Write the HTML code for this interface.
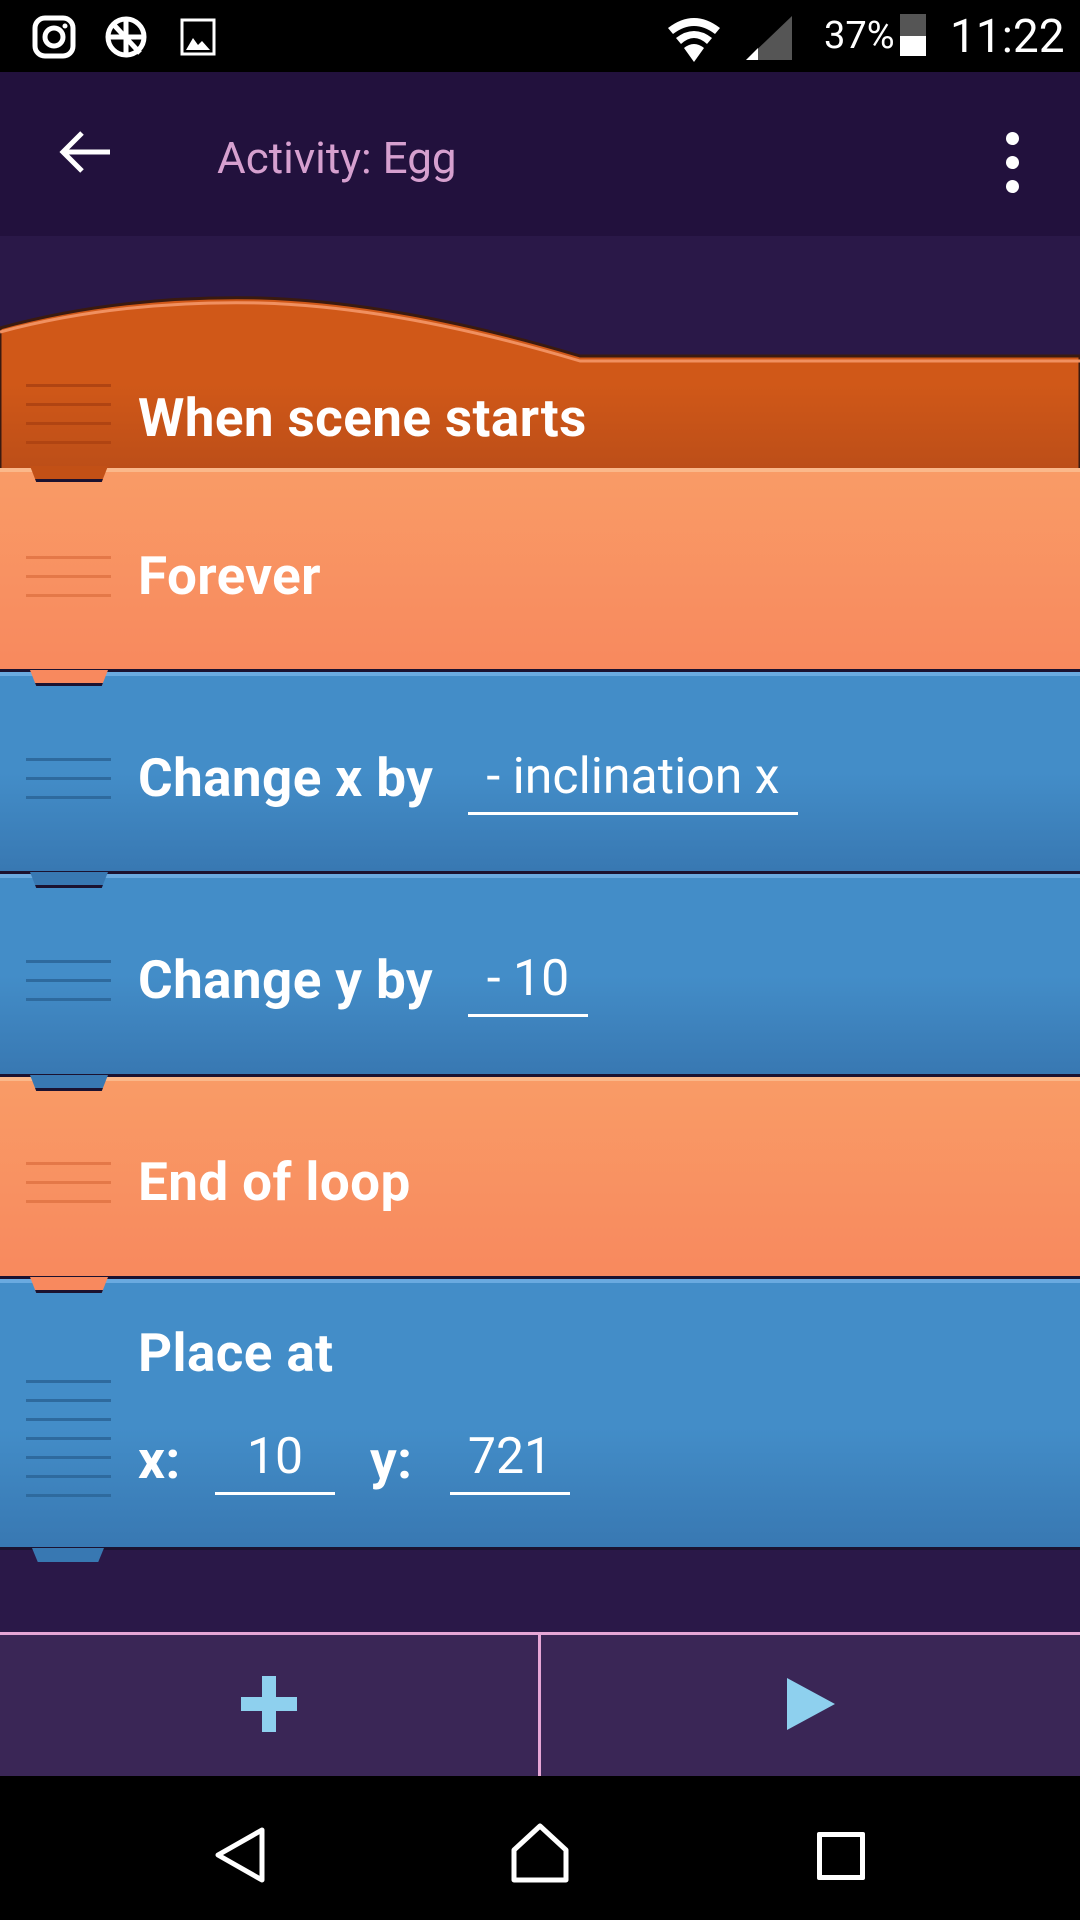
<!DOCTYPE html>
<html><head><meta charset="utf-8"><style>
*{margin:0;padding:0;box-sizing:border-box}
body{width:1080px;height:1920px;background:#2a1848;position:relative;overflow:hidden;font-family:"Roboto","Liberation Sans",sans-serif}
.abs{position:absolute}
.sb{left:0;top:0;width:1080px;height:72px;background:#000;color:#fff}
.tb{left:0;top:72px;width:1080px;height:164px;background:#22113d}
.blk{position:absolute;left:0;width:1080px;border-bottom:3px solid #1b1230}
.lbl{position:absolute;left:138px;color:#fff;font-weight:bold;font-size:53px;letter-spacing:0.4px;line-height:1}
.inp{position:absolute;color:#fff;font-size:50px;line-height:1;border-bottom:3px solid #fff;text-align:center;padding-bottom:10px}
.grip{position:absolute;left:26px;width:85px}
.grip div{height:3px;margin-bottom:16px}
.notch{position:absolute;left:30px;width:78px;height:16px;clip-path:polygon(0 0,100% 0,92% 100%,8% 100%);border-bottom:3px solid #1b1230}
</style></head><body>
<div class="abs sb">
 <svg class="abs" style="left:32px;top:15px" width="44" height="44" viewBox="0 0 44 44"><rect x="3" y="3" width="38" height="38" rx="10" fill="none" stroke="#fff" stroke-width="5"/><circle cx="22" cy="22" r="9" fill="none" stroke="#fff" stroke-width="5"/><circle cx="33" cy="11" r="2.5" fill="#fff"/></svg>
 <svg class="abs" style="left:104px;top:15px" width="44" height="44" viewBox="0 0 44 44"><circle cx="22" cy="22" r="18" fill="none" stroke="#fff" stroke-width="5"/><path d="M4 22h36M22 4v36M10 10l26 28" stroke="#fff" stroke-width="5"/></svg>
 <svg class="abs" style="left:180px;top:18px" width="36" height="38" viewBox="0 0 36 38"><rect x="2" y="2" width="32" height="34" fill="none" stroke="#fff" stroke-width="3"/><path d="M6 32l7-12 5 7 4-4 8 9z" fill="#fff"/></svg>
 <svg class="abs" style="left:664px;top:14px" width="60" height="50" viewBox="0 0 60 50"><path d="M4 14Q30-6 56 14l-5 6Q30 4 9 20z M12 24Q30 10 48 24l-5 6Q30 18 17 30z M20 34Q30 26 40 34L30 48z" fill="#fff"/></svg>
 <svg class="abs" style="left:744px;top:14px" width="50" height="48" viewBox="0 0 50 48"><path d="M48 2V46H2z" fill="#555"/><path d="M14 34V46H2z" fill="#fff"/></svg>
 <div class="abs" style="left:824px;top:14px;font-size:38px">37%</div>
 <div class="abs" style="left:900px;top:14px;width:26px;height:42px;background:#555"><div style="position:absolute;bottom:0;width:26px;height:20px;background:#fff"></div></div>
 <div class="abs" style="left:950px;top:10px;font-size:46px">11:22</div>
</div>
<div class="abs tb">
 <svg class="abs" style="left:58px;top:58px" width="54" height="44" viewBox="0 0 54 44"><path d="M4 22H52M24 3L5 22l19 19" fill="none" stroke="#fff" stroke-width="5"/></svg>
 <div class="abs" style="left:217px;top:60px;font-size:44px;color:#d6a0cf">Activity: Egg</div>
 <div class="abs" style="left:1006px;top:60px;width:13px;height:13px;border-radius:50%;background:#fff"></div>
 <div class="abs" style="left:1006px;top:84px;width:13px;height:13px;border-radius:50%;background:#fff"></div>
 <div class="abs" style="left:1006px;top:108px;width:13px;height:13px;border-radius:50%;background:#fff"></div>
</div>
<svg class="abs" style="left:0;top:290px" width="1080" height="180" viewBox="0 0 1080 180"><defs><linearGradient id="h" x1="0" y1="0" x2="0" y2="1"><stop offset="0.5" stop-color="#d05818"/><stop offset="1" stop-color="#bc4e18"/></linearGradient></defs><path d="M0 38Q120 5 260 8Q400 12 580 66H1080V180H0z" fill="url(#h)" stroke="#3a1a10" stroke-width="3"/><path d="M0 42Q120 10 260 13Q400 17 580 71H1080" fill="none" stroke="#f09060" stroke-width="3"/></svg>
<div class="lbl" style="top:392px">When scene starts</div>
<div class="grip" style="top:384px"><div style="background:#b04412"></div><div style="background:#b04412"></div><div style="background:#b04412"></div><div style="background:#b04412"></div></div>

<div class="blk" style="top:468px;height:204px;background:linear-gradient(#f99b66,#f8895e);border-top:4px solid #fbb88a"></div>
<div class="notch" style="top:466px;background:#c25016"></div>
<div class="lbl" style="top:550px">Forever</div>
<div class="grip" style="top:556px"><div style="background:#e47848"></div><div style="background:#e47848"></div><div style="background:#e47848"></div></div>

<div class="blk" style="top:672px;height:202px;background:linear-gradient(#438dc8 50%,#3878b2);border-top:4px solid #6aaae0"></div>
<div class="notch" style="top:670px;background:#f8895e"></div>
<div class="lbl" style="top:752px">Change x by</div>
<div class="inp" style="left:468px;top:752px;width:330px">- inclination x</div>
<div class="grip" style="top:758px"><div style="background:#2e6a9e"></div><div style="background:#2e6a9e"></div><div style="background:#2e6a9e"></div></div>

<div class="blk" style="top:874px;height:203px;background:linear-gradient(#438dc8 50%,#3878b2);border-top:4px solid #6aaae0"></div>
<div class="notch" style="top:872px;background:#3878b2"></div>
<div class="lbl" style="top:954px">Change y by</div>
<div class="inp" style="left:468px;top:954px;width:120px">- 10</div>
<div class="grip" style="top:960px"><div style="background:#2e6a9e"></div><div style="background:#2e6a9e"></div><div style="background:#2e6a9e"></div></div>

<div class="blk" style="top:1077px;height:202px;background:linear-gradient(#f99b66,#f8895e);border-top:4px solid #fbb88a"></div>
<div class="notch" style="top:1075px;background:#3878b2"></div>
<div class="lbl" style="top:1156px">End of loop</div>
<div class="grip" style="top:1162px"><div style="background:#e47848"></div><div style="background:#e47848"></div><div style="background:#e47848"></div></div>

<div class="blk" style="top:1279px;height:271px;background:linear-gradient(#438dc8 55%,#3878b2);border-top:4px solid #6aaae0"></div>
<div class="notch" style="top:1277px;background:#f8895e"></div>
<div class="lbl" style="top:1327px">Place at</div>
<div class="lbl" style="top:1434px">x:</div>
<div class="inp" style="left:215px;top:1432px;width:120px">10</div>
<div class="lbl" style="left:370px;top:1434px">y:</div>
<div class="inp" style="left:450px;top:1432px;width:120px">721</div>
<div class="grip" style="top:1380px"><div style="background:#2e6a9e"></div><div style="background:#2e6a9e"></div><div style="background:#2e6a9e"></div><div style="background:#2e6a9e"></div><div style="background:#2e6a9e"></div><div style="background:#2e6a9e"></div><div style="background:#2e6a9e"></div></div>
<div class="abs" style="left:32px;top:1548px;width:72px;height:14px;background:#3878b2;clip-path:polygon(0 0,100% 0,92% 100%,8% 100%)"></div>

<div class="abs" style="left:0;top:1632px;width:1080px;height:144px;background:#3a2656;border-top:3px solid #e6a6d6"></div>
<div class="abs" style="left:538px;top:1632px;width:3px;height:144px;background:#e6a6d6"></div>
<div class="abs" style="left:241px;top:1697px;width:56px;height:14px;background:#8ed0ee"></div>
<div class="abs" style="left:262px;top:1676px;width:14px;height:56px;background:#8ed0ee"></div>
<svg class="abs" style="left:785px;top:1676px" width="52" height="56" viewBox="0 0 52 56"><path d="M2 2L50 28 2 54z" fill="#8ed0ee"/></svg>

<div class="abs" style="left:0;top:1776px;width:1080px;height:144px;background:#000"></div>
<svg class="abs" style="left:212px;top:1826px" width="56" height="58" viewBox="0 0 56 58"><path d="M50 4V54L6 29z" fill="none" stroke="#fff" stroke-width="5" stroke-linejoin="round"/></svg>
<svg class="abs" style="left:508px;top:1822px" width="64" height="62" viewBox="0 0 64 62"><path d="M6 58V28L32 4 58 28V58z" fill="none" stroke="#fff" stroke-width="5" stroke-linejoin="round"/></svg>
<div class="abs" style="left:817px;top:1832px;width:48px;height:48px;border:5px solid #fff;border-radius:2px"></div>
</body></html>
